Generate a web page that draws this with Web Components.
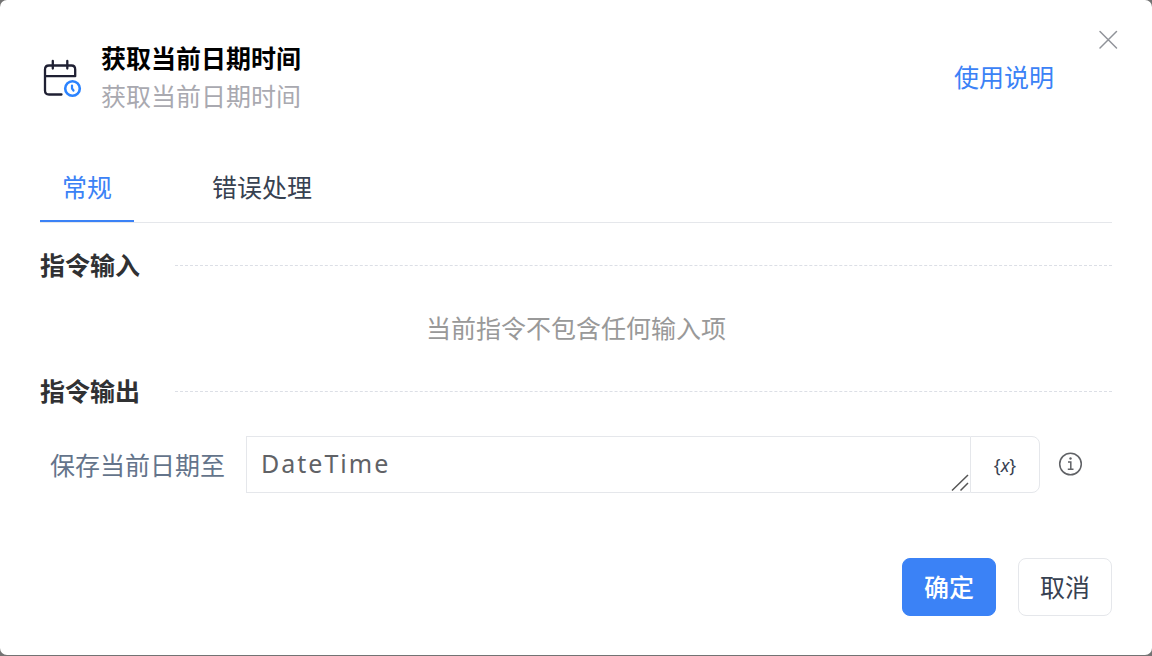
<!DOCTYPE html>
<html lang="zh-CN">
<head>
<meta charset="utf-8">
<meta name="viewport" content="width=device-width, initial-scale=1">
<title>获取当前日期时间</title>
<style>
  body {
    margin: 0;
    padding-bottom: 1px;
    background: #737373;
    font: 25px/38px "Noto Sans", "Noto Sans CJK SC", sans-serif;
    color: #374151;
    --accent: #3b82f6;
    --line: #e5e7eb;
  }
</style>
</head>
<body>
<command-dialog>
  <dialog-header slot="header" href="#help">
    <span slot="title">获取当前日期时间</span>
    <span slot="description">获取当前日期时间</span>
    <span slot="link">使用说明</span>
  </dialog-header>
  <tab-bar slot="tabs">
    <tab-item selected>常规</tab-item>
    <tab-item>错误处理</tab-item>
  </tab-bar>
  <form-section>
    <span slot="heading">指令输入</span>
    <empty-note>当前指令不包含任何输入项</empty-note>
  </form-section>
  <form-section>
    <span slot="heading">指令输出</span>
    <variable-field label="保存当前日期至" value="DateTime"></variable-field>
  </form-section>
  <action-button slot="actions" primary>确定</action-button>
  <action-button slot="actions">取消</action-button>
</command-dialog>

<script>
class BaseElement extends HTMLElement {
  constructor() {
    super();
    this.attachShadow({ mode: "open" });
  }
  connectedCallback() {
    this.shadowRoot.innerHTML = this.render();
  }
}

customElements.define("command-dialog", class extends BaseElement {
  render() {
    return `
      <style>
        :host { display: block; box-sizing: border-box; position: relative; padding: 39px 40px; background: #fff; border-radius: 7px; }
        .close { position: absolute; top: 28px; right: 32px; width: 24px; height: 24px; padding: 0; border: 0; background: none; color: #909399; cursor: pointer; }
        .close svg { display: block; }
        footer { display: flex; justify-content: flex-end; gap: 22px; margin-top: 39px; }
      </style>
      <section role="dialog" aria-label="获取当前日期时间">
        <slot name="header"></slot>
        <slot name="tabs"></slot>
        <slot></slot>
        <footer><slot name="actions"></slot></footer>
        <button class="close" type="button" aria-label="关闭">
          <svg width="24" height="24" viewBox="0 0 24 24" fill="none" stroke="currentColor" stroke-width="1.5" stroke-linecap="round"><path d="M4 3.5 20.5 20M20.5 3.5 4 20"/></svg>
        </button>
      </section>`;
  }
});

customElements.define("dialog-header", class extends BaseElement {
  render() {
    return `
      <style>
        :host { display: flex; align-items: center; gap: 17px; }
        svg { flex: none; }
        .text { flex: 1; }
        h1, p { margin: 0; font-size: 25px; line-height: 38px; }
        h1 { font-weight: 700; color: #000; }
        p { color: #a9a9b0; }
        a { margin-right: 58px; color: var(--accent); text-decoration: none; }
      </style>
      <svg width="44" height="44" viewBox="0 0 44 44" fill="none" stroke-linecap="round" stroke-linejoin="round" aria-hidden="true">
        <g stroke="#1f2033" stroke-width="2.3">
          <path d="M21.5 39.5H9Q5 39.5 5 35.5V14.5Q5 10.5 9 10.5H31.5Q35.2 10.5 35.2 14.5V21.2H5"/>
          <path d="M12.8 6V13.5M27.3 6V13.5"/>
        </g>
        <g stroke="#2b83ff">
          <circle cx="32.5" cy="33.5" r="7.3" stroke-width="2.6"/>
          <path d="M32 30.5V33.5L33.5 35.5" stroke-width="2.2"/>
        </g>
      </svg>
      <div class="text">
        <h1><slot name="title"></slot></h1>
        <p><slot name="description"></slot></p>
      </div>
      <a href="${this.getAttribute("href")}"><slot name="link"></slot></a>`;
  }
});

customElements.define("tab-bar", class extends BaseElement {
  render() {
    return `
      <style>
        :host { display: block; margin: 39px 0 23px; border-bottom: 1px solid var(--line); }
        nav { display: flex; gap: 56px; }
      </style>
      <nav role="tablist"><slot></slot></nav>`;
  }
});

customElements.define("tab-item", class extends BaseElement {
  render() {
    const on = this.hasAttribute("selected");
    return `
      <style>
        :host { display: block; }
        button { display: block; height: 68px; padding: 0 22px; border: 0 solid transparent; border-bottom-width: 2px; background: none; font: inherit; color: inherit; cursor: pointer; }
        button[aria-selected="true"] { color: var(--accent); border-bottom-color: var(--accent); }
      </style>
      <button type="button" role="tab" aria-selected="${on}"><slot></slot></button>`;
  }
});

customElements.define("form-section", class extends BaseElement {
  render() {
    return `
      <style>
        :host { display: block; }
        header { display: flex; align-items: center; gap: 35px; }
        h2 { margin: 0; font-size: 25px; line-height: 38px; font-weight: 700; color: #303133; }
        hr { flex: 1; margin: 0; border: 0; border-top: 1px dashed #dcdfe6; }
        .body { padding: 26px 0; }
      </style>
      <header><h2><slot name="heading"></slot></h2><hr></header>
      <div class="body"><slot></slot></div>`;
  }
});

customElements.define("empty-note", class extends BaseElement {
  render() {
    return `
      <style>
        :host { display: block; text-align: center; line-height: 36px; color: #999; }
        p { margin: 0; }
      </style>
      <p><slot></slot></p>`;
  }
});

customElements.define("variable-field", class extends BaseElement {
  render() {
    return `
      <style>
        :host { display: flex; align-items: center; padding: 0 29px 0 10px; }
        label { flex: none; margin-right: 21px; color: #64748b; }
        .group { flex: 1; display: flex; height: 57px; position: relative; }
        textarea { flex: 1; min-width: 0; box-sizing: border-box; margin: 0; padding: 7px 14px; border: 1px solid var(--line); border-right: 0; border-radius: 0; outline: 0; resize: none; overflow: hidden; background: #fff; font: inherit; letter-spacing: 2px; color: #606266; }
        .pick { width: 70px; box-sizing: border-box; padding: 0; border: 1px solid var(--line); border-radius: 0 8px 8px 0; background: #fff; font: inherit; font-size: 18px; color: #374151; cursor: pointer; }
        .grip { position: absolute; right: 70px; bottom: 0; pointer-events: none; }
        .info { flex: none; margin-left: 18px; width: 25px; height: 25px; padding: 0; border: 0; background: none; color: #606266; cursor: pointer; }
        .info svg { display: block; }
      </style>
      <label for="value">${this.getAttribute("label")}</label>
      <div class="group">
        <textarea id="value" rows="1" spellcheck="false">${this.getAttribute("value")}</textarea>
        <svg class="grip" width="20" height="20" viewBox="0 0 20 20" stroke="#555" stroke-width="1.5" aria-hidden="true"><path d="M2 17.5 18 2M10.5 17.5 18 10"/></svg>
        <button class="pick" type="button" aria-label="选择变量">{<i>x</i>}</button>
      </div>
      <button class="info" type="button" aria-label="说明">
        <svg width="25" height="25" viewBox="0 0 25 25" fill="none" stroke="currentColor" stroke-width="1.5">
          <circle cx="12.5" cy="12" r="10.8"/>
          <path d="M10 10H12.8V17M9.8 17.2H15.5"/>
          <circle cx="12.5" cy="6.5" r="1.2" fill="currentColor" stroke="none"/>
        </svg>
      </button>`;
  }
});

customElements.define("action-button", class extends BaseElement {
  render() {
    return `
      <style>
        :host { display: block; }
        button { display: block; height: 58px; padding: 0 21px; border: 1px solid var(--line); border-radius: 8px; background: #fff; font: inherit; color: inherit; cursor: pointer; }
        :host([primary]) button { background: var(--accent); border-color: var(--accent); color: #fff; font-weight: 500; }
      </style>
      <button type="button"><slot></slot></button>`;
  }
});
</script>
</body>
</html>
